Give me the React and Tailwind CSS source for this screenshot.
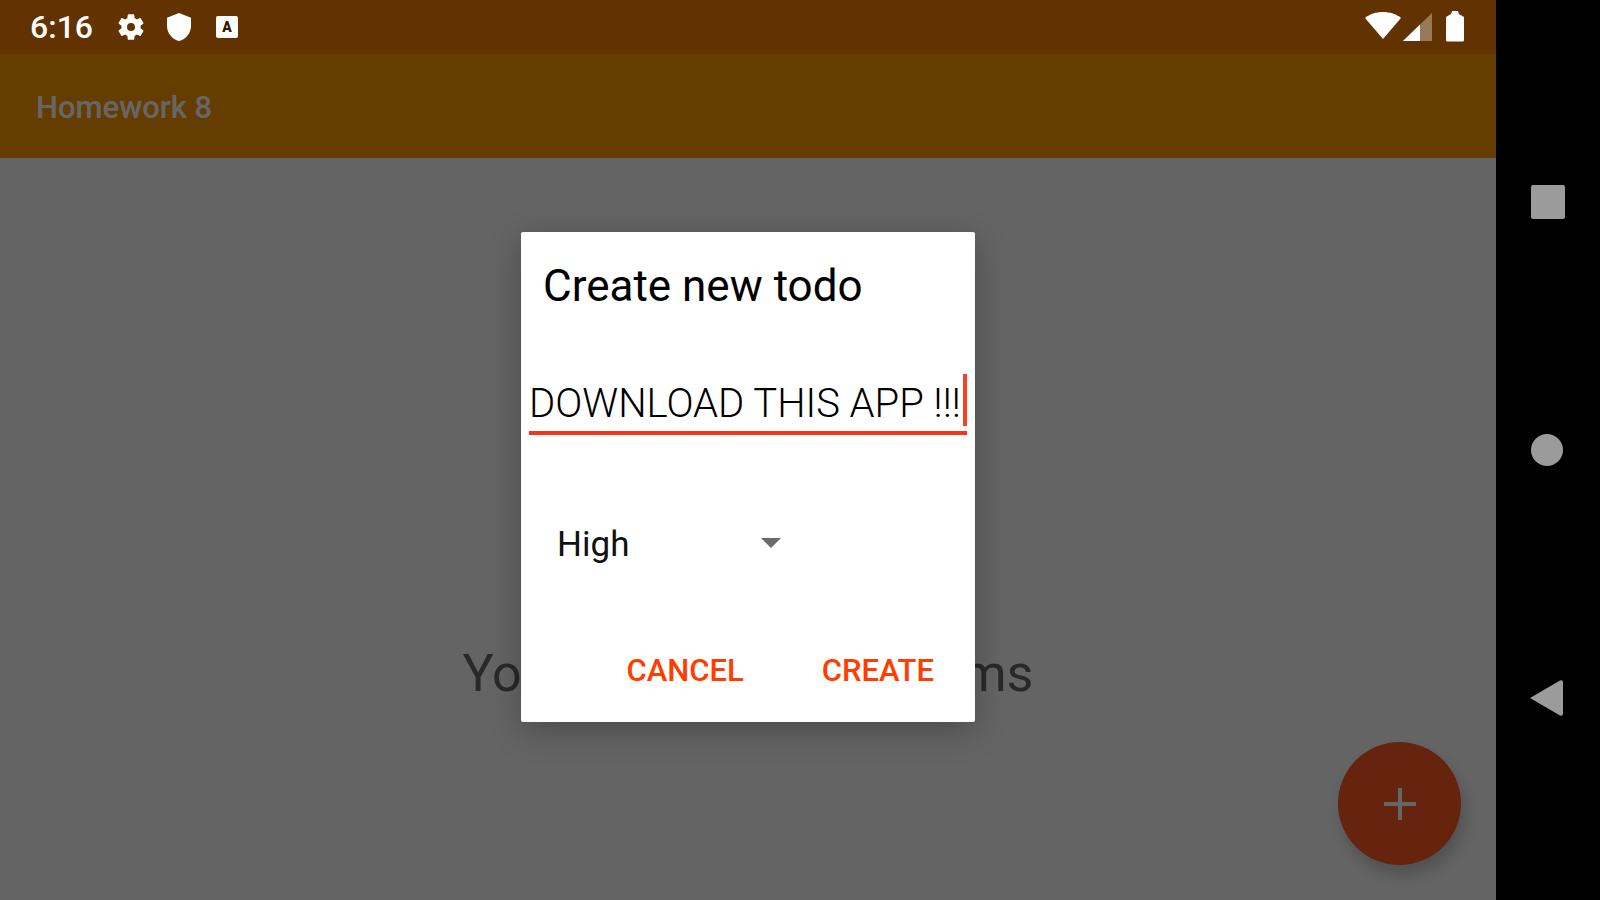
import { useState } from 'react'

function GearIcon() {
  return (
    <svg className="w-8 h-8" viewBox="0 0 24 24" fill="currentColor" aria-hidden="true">
      <path d="M19.14 12.94c.04-.3.06-.61.06-.94s-.02-.64-.07-.94l2.03-1.58a.49.49 0 0 0 .12-.61l-1.92-3.32a.49.49 0 0 0-.59-.22l-2.39.96a7.03 7.03 0 0 0-1.62-.94l-.36-2.54a.48.48 0 0 0-.48-.41h-3.84a.47.47 0 0 0-.47.41l-.36 2.54c-.59.24-1.13.57-1.62.94l-2.39-.96a.48.48 0 0 0-.59.22L2.74 8.87a.47.47 0 0 0 .12.61l2.03 1.58a5.9 5.9 0 0 0 0 1.88l-2.03 1.58a.49.49 0 0 0-.12.61l1.92 3.32c.12.22.37.29.59.22l2.39-.96c.5.38 1.03.7 1.62.94l.36 2.54c.05.24.24.41.48.41h3.84c.24 0 .44-.17.47-.41l.36-2.54c.59-.24 1.13-.56 1.62-.94l2.39.96c.22.08.47 0 .59-.22l1.92-3.32a.47.47 0 0 0-.12-.61zM12 15a3 3 0 1 1 0-6 3 3 0 0 1 0 6z" />
    </svg>
  )
}

function ShieldIcon() {
  return (
    <svg className="w-8 h-8" viewBox="0 0 24 24" fill="currentColor" aria-hidden="true">
      <path d="M12 1.5 3 5v6c0 5.55 3.84 10.2 9 11.5 5.16-1.3 9-5.95 9-11.5V5z" />
    </svg>
  )
}

function StatusBar() {
  return (
    <div className="flex items-center justify-between h-[54px] pl-[30px] pr-8 bg-[#623200] text-white">
      <div className="flex items-center">
        <span className="text-[32px] leading-8 font-medium">6:16</span>
        <div className="flex items-center gap-4 ml-[22px]">
          <GearIcon />
          <ShieldIcon />
          <span className="flex items-center justify-center w-[22px] h-[22px] ml-[5px] rounded-xs bg-white text-[#301800] text-sm leading-none font-black">A</span>
        </div>
      </div>
      <div className="flex items-center">
        <svg className="w-9 h-8" viewBox="0 0 36 32" fill="currentColor" aria-hidden="true">
          <path d="M0 7C9-1 27-1 36 7L18 28z" />
        </svg>
        <svg className="w-[29px] h-8 ml-[2px]" viewBox="0 0 29 32" fill="currentColor" aria-hidden="true">
          <path d="M29 2v28H0z" opacity=".35" />
          <path d="M17 13.6V30H0z" />
        </svg>
        <svg className="w-[18px] h-8 ml-[14px]" viewBox="0 0 18 32" fill="currentColor" aria-hidden="true">
          <path d="M6 0h6l1 3 5 3v23q0 1.5-1.5 1.5h-15Q0 30.5 0 29V6l5-3z" />
        </svg>
      </div>
    </div>
  )
}

function NavBar() {
  return (
    <nav className="flex flex-col items-center justify-center w-[104px] shrink-0 bg-black text-[#9b9b9b]">
      <button aria-label="Recent apps" className="flex items-center justify-center w-full h-[248px]">
        <svg className="w-9 h-9" viewBox="0 0 36 36" fill="currentColor"><rect x="1" y="1" width="34" height="34" rx="2" /></svg>
      </button>
      <button aria-label="Home" className="flex items-center justify-center w-full h-[248px]">
        <svg className="w-9 h-9" viewBox="0 0 36 36" fill="currentColor"><circle cx="17" cy="18" r="16" /></svg>
      </button>
      <button aria-label="Back" className="flex items-center justify-center w-full h-[248px]">
        <svg className="w-9 h-9" viewBox="0 0 36 36" fill="currentColor"><path d="M0 18 30 .5q3-1 3 2v31q0 3-3 2z" /></svg>
      </button>
    </nav>
  )
}

function CreateDialog() {
  const [title, setTitle] = useState('DOWNLOAD THIS APP !!!')
  const [priority, setPriority] = useState('High')

  return (
    <form
      role="dialog"
      aria-labelledby="dialog-title"
      onSubmit={e => e.preventDefault()}
      className="flex flex-col w-[454px] h-[490px] px-2 rounded-xs bg-white text-black shadow-[0_8px_32px_rgba(0,0,0,0.25)]"
    >
      <h2 id="dialog-title" className="mt-7 px-[14px] text-[44px] leading-[52px]">Create new todo</h2>

      <div className="relative mt-[60px] border-b-4 border-[#f9331a]">
        <input
          aria-label="Todo title"
          value={title}
          onChange={e => setTitle(e.target.value)}
          className="block w-full h-[59px] pt-1 text-[40px] font-light outline-none"
        />
        {/* Text cursor */}
        <span className="absolute right-0 top-0.5 w-1 h-[52px] bg-[#ff3d20]" />
      </div>

      <div className="relative w-[260px] mt-[76px]">
        <select
          aria-label="Priority"
          value={priority}
          onChange={e => setPriority(e.target.value)}
          className="block w-full h-16 pt-1 pl-7 appearance-none bg-transparent text-[35px] text-[#111] outline-none"
        >
          <option>High</option>
          <option>Medium</option>
          <option>Low</option>
        </select>
        <svg className="absolute right-2 top-1/2 w-5 h-[10px] -mt-[5px] pointer-events-none" viewBox="0 0 20 10" fill="#6b6b6b" aria-hidden="true">
          <path d="M0 0h20L10 10z" />
        </svg>
      </div>

      <div className="flex justify-end mt-auto mb-[19px] pr-2 gap-7 text-[31px] leading-[64px] font-medium text-[#ff3d00]">
        <button type="button" className="px-[25px]">CANCEL</button>
        <button type="submit" className="px-[25px]">CREATE</button>
      </div>
    </form>
  )
}

export default function App() {
  return (
    <div className="flex min-h-screen bg-black font-[Roboto,sans-serif]">
      <div className="flex flex-col flex-1 min-w-0">
        <StatusBar />

        <div className="relative flex flex-col flex-1 bg-[#fafafa]">
          <header className="flex items-center h-[104px] pl-9 pt-1 bg-[#ff9800] text-white">
            <h1 className="text-[31px] font-medium">Homework 8</h1>
          </header>

          <main className="flex flex-col flex-1 items-center justify-end pb-[194px]">
            <p className="text-[52px] leading-[64px] text-[#666]">You don't have any items</p>
          </main>

          <button aria-label="Add todo" className="absolute right-[35px] bottom-[35px] flex items-center justify-center w-[123px] h-[123px] rounded-full bg-[#ff5722] text-white shadow-[4px_10px_16px_rgba(0,0,0,0.2)]">
            <svg className="w-8 h-8" viewBox="0 0 32 32" stroke="currentColor" strokeWidth="4" aria-hidden="true">
              <path d="M16 0v32M0 16h32" />
            </svg>
          </button>

          {/* Scrim and dialog */}
          <div className="absolute inset-0 flex items-center justify-center bg-black/60">
            <CreateDialog />
          </div>
        </div>
      </div>
      <NavBar />
    </div>
  )
}
